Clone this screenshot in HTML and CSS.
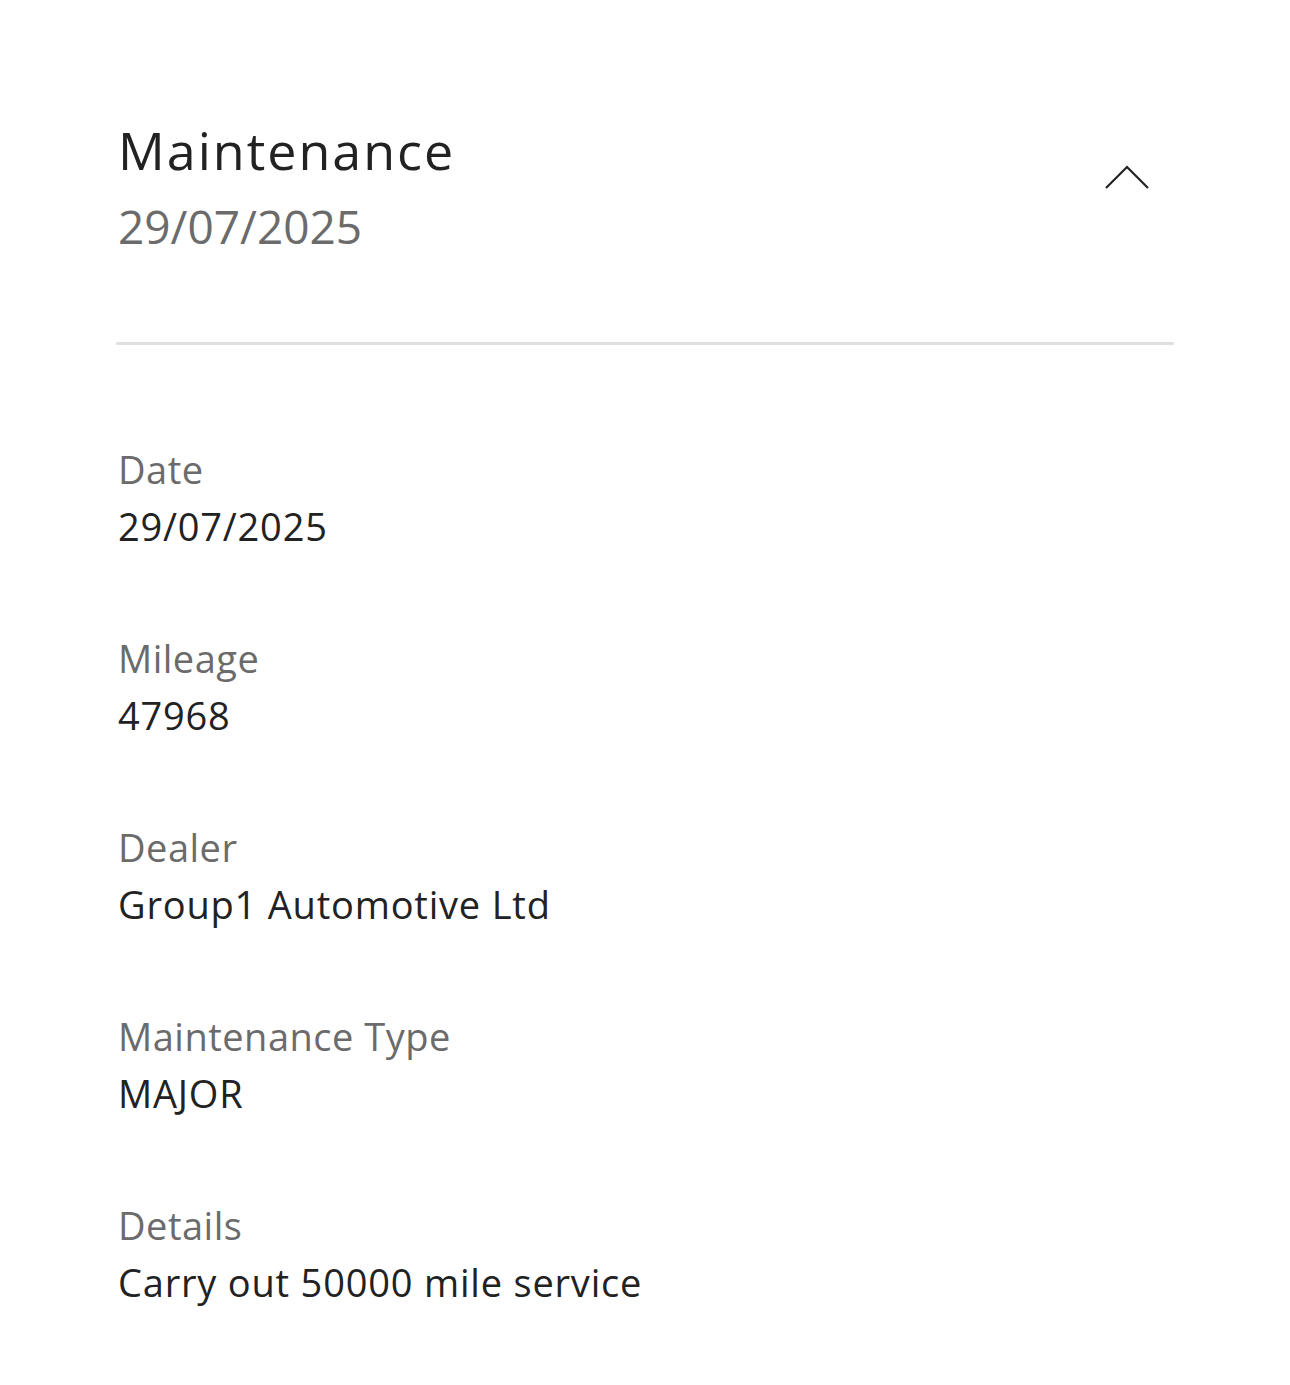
FILE: index.html
```html
<!DOCTYPE html>
<html lang="en">
<head>
    <meta charset="UTF-8">
    <meta name="viewport" content="width=device-width, initial-scale=1.0">
    <title>Maintenance</title>
    <link rel="stylesheet" href="styles.css">
</head>
<body>
    <div class="record">
        <div class="record-header">
            <div class="record-heading">
                <h1 class="record-title">Maintenance</h1>
                <div class="record-date">29/07/2025</div>
            </div>
            <button class="toggle-btn" aria-label="Collapse">
                <svg width="46" height="26" viewBox="0 0 46 26">
                    <polyline points="2,23 23,2 44,23" fill="none" stroke="#222" stroke-width="2.2"/>
                </svg>
            </button>
        </div>

        <div class="divider"></div>

        <dl class="record-fields">
            <div class="field">
                <dt class="field-label">Date</dt>
                <dd class="field-value">29/07/2025</dd>
            </div>
            <div class="field">
                <dt class="field-label">Mileage</dt>
                <dd class="field-value">47968</dd>
            </div>
            <div class="field">
                <dt class="field-label">Dealer</dt>
                <dd class="field-value">Group1 Automotive Ltd</dd>
            </div>
            <div class="field">
                <dt class="field-label">Maintenance Type</dt>
                <dd class="field-value">MAJOR</dd>
            </div>
            <div class="field">
                <dt class="field-label">Details</dt>
                <dd class="field-value">Carry out 50000 mile service</dd>
            </div>
        </dl>
    </div>
</body>
</html>
```

FILE: styles.css
```css
* {
    margin: 0;
    padding: 0;
    box-sizing: border-box;
    font-family: 'Open Sans', 'Noto Sans', sans-serif;
}

body {
    background-color: #fff;
    color: #222;
}

.record {
    padding: 120px 116px 0 116px;
}

.record-header {
    display: flex;
    justify-content: space-between;
    align-items: flex-start;
    padding: 0 0 0 2px;
}

.record-title {
    font-size: 52px;
    font-weight: 400;
    line-height: 60px;
    letter-spacing: 2px;
    color: #222;
}

.record-date {
    margin-top: 16px;
    font-size: 46px;
    line-height: 60px;
    color: #6b6b6b;
}

.toggle-btn {
    background: none;
    border: none;
    margin: 45px 24px 0 0;
    cursor: pointer;
}

.toggle-btn svg {
    display: block;
}

.divider {
    height: 3px;
    margin-top: 86px;
    background-color: #e0e0e0;
    border-radius: 2px;
}

.record-fields {
    padding: 96px 0 0 2px;
}

.field {
    margin-bottom: 75px;
}

.field-label {
    font-size: 38px;
    line-height: 57px;
    letter-spacing: 0.5px;
    color: #6b6b6b;
}

.field-value {
    font-size: 38px;
    line-height: 57px;
    letter-spacing: 0.8px;
    color: #222;
}
```
